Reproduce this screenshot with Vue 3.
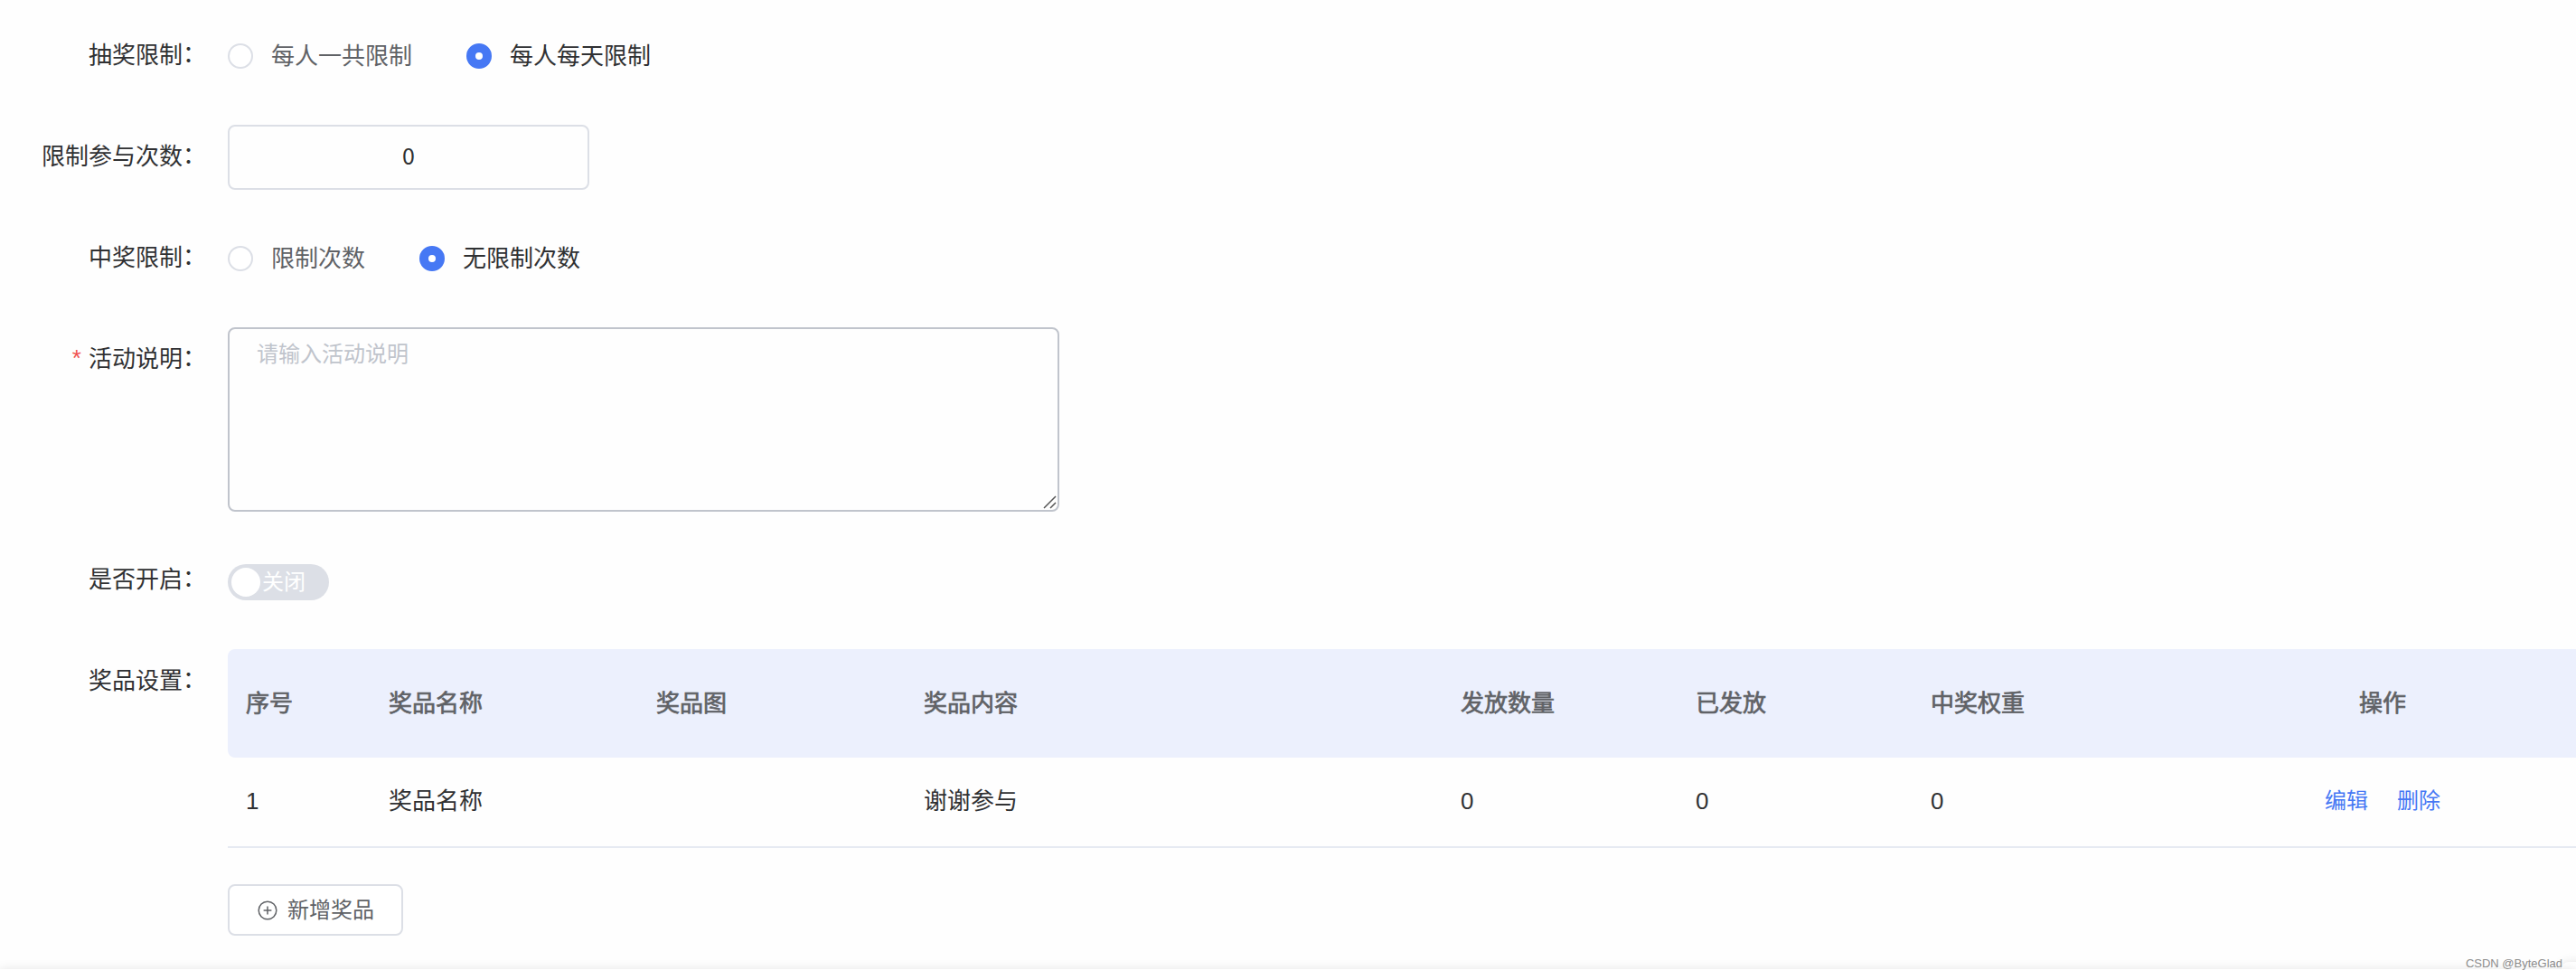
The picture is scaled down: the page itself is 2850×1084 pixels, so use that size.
<script setup>
import {ref} from 'vue';

const limitOptions = ['每人一共限制', '每人每天限制'];
const winOptions = ['限制次数', '无限制次数'];

const limitType = ref('每人每天限制');
const winType = ref('无限制次数');
const times = ref(0);
const enabled = ref(false);

const prizes = ref([
    {name: '奖品名称', image: '', content: '谢谢参与', total: 0, sent: 0, weight: 0},
]);
</script>

<template>
    <div class="page">
        <div class="form">
            <div class="form-item">
                <div class="label">抽奖限制<span class="colon">：</span></div>
                <div class="content">
                    <div
                        v-for="item in limitOptions"
                        :key="item"
                        class="radio"
                        :class="{ checked: limitType === item }"
                        @click="limitType = item"
                    >
                        <i class="radio-dot"></i>
                        <span>{{ item }}</span>
                    </div>
                </div>
            </div>
            <div class="form-item">
                <div class="label">限制参与次数<span class="colon">：</span></div>
                <div class="content">
                    <div class="input">{{ times }}</div>
                </div>
            </div>
            <div class="form-item">
                <div class="label">中奖限制<span class="colon">：</span></div>
                <div class="content">
                    <div
                        v-for="item in winOptions"
                        :key="item"
                        class="radio"
                        :class="{ checked: winType === item }"
                        @click="winType = item"
                    >
                        <i class="radio-dot"></i>
                        <span>{{ item }}</span>
                    </div>
                </div>
            </div>
            <div class="form-item">
                <div class="label"><span class="required">*</span>活动说明<span class="colon">：</span></div>
                <div class="content">
                    <div class="textarea">
                        <span>请输入活动说明</span>
                        <svg class="resizer" width="15" height="15" viewBox="0 0 15 15">
                            <path d="M1 14L14 1M8 14L14 8" fill="none" stroke="#555" stroke-width="1.5" />
                        </svg>
                    </div>
                </div>
            </div>
            <div class="form-item">
                <div class="label">是否开启<span class="colon">：</span></div>
                <div class="content">
                    <div class="switch" @click="enabled = !enabled">
                        <i class="switch-knob"></i>
                        <span>{{ enabled ? '开启' : '关闭' }}</span>
                    </div>
                </div>
            </div>
            <div class="form-item">
                <div class="label">奖品设置<span class="colon">：</span></div>
                <div class="content column">
                    <div class="table">
                        <div class="tr thead">
                            <div>序号</div>
                            <div>奖品名称</div>
                            <div>奖品图</div>
                            <div>奖品内容</div>
                            <div>发放数量</div>
                            <div>已发放</div>
                            <div>中奖权重</div>
                            <div class="center">操作</div>
                        </div>
                        <div v-for="(row, index) in prizes" :key="index" class="tr tbody">
                            <div>{{ index + 1 }}</div>
                            <div>{{ row.name }}</div>
                            <div>{{ row.image }}</div>
                            <div>{{ row.content }}</div>
                            <div>{{ row.total }}</div>
                            <div>{{ row.sent }}</div>
                            <div>{{ row.weight }}</div>
                            <div class="center actions">
                                <a>编辑</a>
                                <a>删除</a>
                            </div>
                        </div>
                    </div>
                    <div class="add-btn">
                        <svg width="24" height="24" viewBox="0 0 24 24">
                            <circle cx="12" cy="12" r="9.8" />
                            <path d="M7.6 12h8.8M12 7.6v8.8" />
                        </svg>
                        <span>新增奖品</span>
                    </div>
                </div>
            </div>
        </div>
        <div class="footer"></div>
        <div class="float-card"></div>
        <div class="watermark">CSDN @ByteGlad</div>
    </div>
</template>

<style>
body {
    background: #fff;
    overflow: hidden;
}
</style>

<style scoped>
.page {
    position: relative;
    display: flex;
    flex-direction: column;
    width: 2850px;
    height: 1084px;
    overflow: hidden;
    box-sizing: border-box;
    background: #fefefe;
    color: #303133;
    font-family: "Liberation Sans", "Noto Sans CJK SC", sans-serif;
    font-size: 26px;
}

.page * {
    box-sizing: border-box;
}

.form {
    display: flex;
    flex-direction: column;
    gap: 40px;
    height: 1072px;
    padding-top: 26px;
    flex: none;
}

.form-item {
    display: flex;
    flex: none;
    min-height: 72px;
}

.label {
    display: flex;
    justify-content: flex-end;
    flex: none;
    width: 252px;
    height: 72px;
    padding-right: 24px;
    line-height: 71px;
    white-space: nowrap;
}

.colon {
    transform: translate(0, -1px);
}

.required {
    margin-right: 8px;
    color: #f0524f;
    line-height: 68px;
}

.content {
    display: flex;
    align-items: center;
    flex: 1;
    min-width: 0;
}

.content.column {
    flex-direction: column;
    align-items: flex-start;
}

.radio {
    display: flex;
    align-items: center;
    gap: 20px;
    height: 72px;
    margin-right: 60px;
    color: #606266;
    line-height: 72px;
}

.radio.checked {
    color: #303133;
}

.radio-dot {
    width: 28px;
    height: 28px;
    border: 2px solid #dcdfe6;
    border-radius: 50%;
    background: #fff;
}

.checked .radio-dot {
    border: 10px solid #4678f4;
}

.input {
    width: 400px;
    height: 72px;
    border: 2px solid #dcdfe6;
    border-radius: 8px;
    font-family: "Noto Sans CJK SC", sans-serif;
    font-size: 25px;
    line-height: 63px;
    text-align: center;
}

.textarea {
    position: relative;
    width: 920px;
    height: 204px;
    padding: 10px 30px;
    border: 2px solid #c0c4cc;
    border-radius: 8px;
    color: #c0c4cc;
    font-size: 24px;
    line-height: 36px;
}

.resizer {
    position: absolute;
    right: 1px;
    bottom: 1px;
}

.switch {
    display: flex;
    align-items: center;
    gap: 2px;
    width: 112px;
    height: 40px;
    margin-top: 4px;
    padding-left: 4px;
    border-radius: 20px;
    background: #dcdfe6;
    color: #fff;
    font-size: 24px;
    line-height: 40px;
}

.switch-knob {
    width: 32px;
    height: 32px;
    border-radius: 50%;
    background: #fff;
}

.table {
    width: 100%;
    overflow: hidden;
}

.tr {
    display: grid;
    grid-template-columns: 158px 296px 296px 594px 260px 260px 260px 520px;
    align-items: center;
    width: 2644px;
    line-height: 40px;
}

.tr > div {
    padding: 0 20px;
}

.thead {
    height: 120px;
    border-radius: 8px;
    background: #ecf0fd;
    color: #606266;
    -webkit-text-stroke: 0.7px #606266;
}

.tbody {
    height: 100px;
    padding-bottom: 2px;
    border-bottom: 2px solid #e6eaf2;
}

.tr > .center {
    display: flex;
    justify-content: center;
}

.actions {
    gap: 32px;
    color: #4678f4;
    font-size: 24px;
}

.add-btn {
    display: flex;
    align-items: center;
    gap: 10px;
    height: 57px;
    margin-top: 40px;
    padding: 0 30px;
    border: 2px solid #dcdfe6;
    border-radius: 8px;
    background: #fff;
    color: #606266;
    font-size: 24px;
    line-height: 52px;
}

.add-btn svg {
    fill: none;
    stroke: #606266;
    stroke-width: 1.5;
}

.footer {
    position: relative;
    z-index: 1;
    flex: 1;
    background: #fff;
    box-shadow: 0 0 12px rgba(0, 0, 0, 0.1);
}

.float-card {
    position: absolute;
    left: 2834px;
    top: 1064px;
    width: 40px;
    height: 40px;
    border-radius: 8px;
    background: #fff;
    box-shadow: 0 0 12px rgba(0, 0, 0, 0.1);
}

.watermark {
    position: absolute;
    z-index: 2;
    right: 15px;
    bottom: 9px;
    color: #8c8c8c;
    font-size: 13px;
    line-height: 18px;
    text-shadow: 1px 1px 0 #fff;
}
</style>
